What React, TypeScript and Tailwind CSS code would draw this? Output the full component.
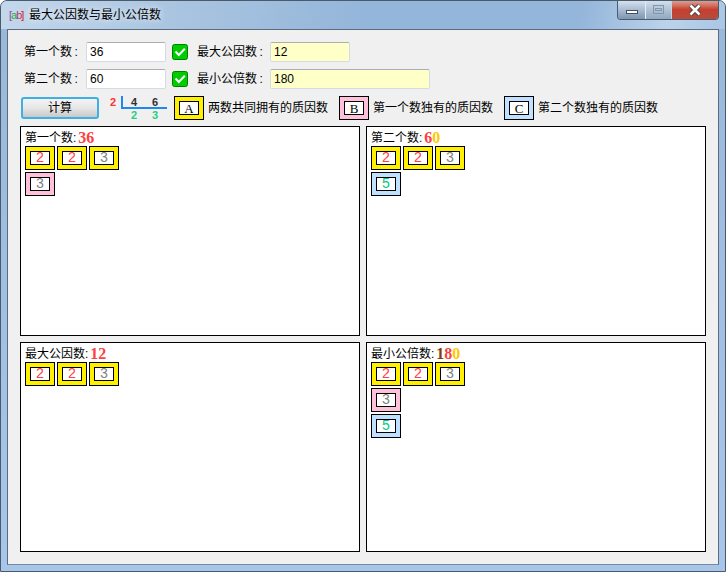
const TILE_BG: Record<string, string> = {
  both: "bg-[#fff000]",
  first: "bg-[#ffc0dc]",
  second: "bg-[#c0e0ff]",
};

const TILE_TEXT: Record<string, string> = {
  "2": "text-[#ff4040] font-['Liberation_Mono',monospace] text-[14px]",
  "3": "text-[#808080] font-['Liberation_Mono',monospace] text-[14px]",
  "5": "text-[#00c880] font-['Liberation_Mono',monospace] text-[14px]",
  A: "text-black font-['Liberation_Serif',serif] text-[13px]",
  B: "text-black font-['Liberation_Serif',serif] text-[13px]",
  C: "text-black font-['Liberation_Serif',serif] text-[13px]",
};

type Factor = { n: string; kind: string };

function Tile({ n, kind }: Factor) {
  return (
    <div className={`w-[30px] h-[24px] shrink-0 border border-black flex items-center justify-center ${TILE_BG[kind]}`}>
      <div className={`w-[20px] h-[14px] border border-black bg-white flex items-center justify-center leading-none ${TILE_TEXT[n]}`}>
        {n}
      </div>
    </div>
  );
}

function Check() {
  return (
    <svg width="16" height="16" viewBox="0 0 16 16" className="shrink-0">
      <rect x="0.5" y="0.5" width="15" height="15" rx="2" fill="#00cc00" stroke="#008000" />
      <path d="M3.5 7.5 L6.8 11 L12.8 4.8" fill="none" stroke="#ffffff" strokeWidth="2" />
    </svg>
  );
}

function Panel({
  label,
  digits,
  rows,
}: {
  label: string;
  digits: [string, string][];
  rows: Factor[][];
}) {
  return (
    <div className="h-[210px] bg-white border border-black px-[4px] pt-[2px]">
      <div className="h-[17px] flex items-center text-[12px] text-black leading-none">
        {label}:
        <span className="font-['Liberation_Serif',serif] font-bold text-[16px] ml-[2px]">
          {digits.map(([d, c], i) => (
            <span key={i} className={c}>
              {d}
            </span>
          ))}
        </span>
      </div>
      <div className="flex flex-col gap-[2px]">
        {rows.map((r, i) => (
          <div key={i} className="flex gap-[2px]">
            {r.map((f, j) => (
              <Tile key={j} {...f} />
            ))}
          </div>
        ))}
      </div>
    </div>
  );
}

function Legend({ letter, kind, text, className }: { letter: string; kind: string; text: string; className: string }) {
  return (
    <div className={`flex items-center gap-[4px] text-[12px] ${className}`}>
      <Tile n={letter} kind={kind} />
      <span>{text}</span>
    </div>
  );
}

function Fraction() {
  return (
    <svg width="60" height="24" viewBox="0 0 60 24" className="ml-[11px] shrink-0 font-['Liberation_Sans',sans-serif] font-bold text-[11px]">
      <path d="M12 0 V12 H57" fill="none" stroke="#1e88f0" strokeWidth="2" />
      <text x="0" y="10" fill="#ff3030">2</text>
      <text x="21" y="10" fill="#303030">4</text>
      <text x="42" y="10" fill="#303030">6</text>
      <text x="21" y="23" fill="#20d080">2</text>
      <text x="42" y="23" fill="#20d080">3</text>
    </svg>
  );
}

const RED = "text-[#ff4040]";
const YELLOW = "text-[#ffc800]";
const BROWN = "text-[#804000]";

const two: Factor = { n: "2", kind: "both" };
const three: Factor = { n: "3", kind: "both" };

export default function App() {
  return (
    <div className="w-[726px] h-[572px] overflow-hidden rounded-t-[7px] border border-[#4a5a6a] bg-gradient-to-b from-[#98b8da] to-[#a8c6ea] font-['Liberation_Sans','Noto_Sans_CJK_SC',sans-serif] text-black flex flex-col">
      {/* title bar */}
      <div className="h-[28px] shrink-0 flex items-start pl-[8px] pr-[6px] bg-[linear-gradient(100deg,#c4d8ec_0%,#a9c4e0_25%,#94b6da_50%,#94b6da_80%,#bcd3ea_92%,#a9c6e4_100%)]">
        <div className="mt-[7px] w-[16px] text-[11px] leading-[14px] tracking-[-1px] whitespace-nowrap">
          <span className="text-[#a040a0]">[</span>
          <span className="text-[#20b040]">a</span>
          <span className="text-[#d03060]">b</span>
          <span className="text-[#d02020]">]</span>
        </div>
        <div className="mt-[7px] ml-[4px] text-[12px] leading-[14px] [text-shadow:0_0_6px_#ffffff]">最大公因数与最小公倍数</div>
        <div className="ml-auto flex h-[20px] -mt-px rounded-b-[4px] border border-t-0 border-[#4c5c70] overflow-hidden">
          <div className="w-[28px] flex items-center justify-center border-r border-[#e4ecf4] bg-gradient-to-b from-[#dbe6f0] via-[#a9bdd3] to-[#7e96b0]">
            <div className="w-[12px] h-[4px] mt-[5px] bg-white border border-[#40505f]" />
          </div>
          <div className="w-[26px] flex items-center justify-center border-r border-[#c8d4e0] bg-gradient-to-b from-[#d8e3ee] via-[#b0c3d7] to-[#93a9c0]">
            <div className="w-[11px] h-[9px] border border-[#8296ac] flex items-center justify-center">
              <div className="w-[7px] h-[3px] border border-[#8296ac]" />
            </div>
          </div>
          <div className="w-[46px] flex items-center justify-center bg-gradient-to-b from-[#dca79c] via-[#c64030] to-[#b84a3c]">
            <svg width="14" height="12" viewBox="0 0 14 12">
              <path d="M2.5 1.5 L11.5 10.5 M11.5 1.5 L2.5 10.5" stroke="#3c3c3c" strokeWidth="4.4" />
              <path d="M2.5 1.5 L11.5 10.5 M11.5 1.5 L2.5 10.5" stroke="#ffffff" strokeWidth="2.6" />
            </svg>
          </div>
        </div>
      </div>

      {/* client area */}
      <div className="mx-[6px] h-[536px] border border-[#5c6c80] border-b-[#7a8a9c] bg-[#f0f0f0] pt-[12px] text-[12px]">
        <div className="flex items-center h-[20px] pl-[16px]">
          <span className="w-[62px]">第一个数&thinsp;:</span>
          <div className="w-[80px] h-[20px] rounded-[2px] border border-[#d4dbe4] border-t-[#abadb3] bg-white pl-[3px] leading-[18px]">36</div>
          <div className="ml-[6px]"><Check /></div>
          <span className="ml-[9px] w-[73px]">最大公因数&thinsp;:</span>
          <div className="w-[80px] h-[20px] rounded-[2px] border border-[#d4dbe4] border-t-[#abadb3] bg-[#ffffc8] pl-[3px] leading-[18px]">12</div>
        </div>
        <div className="flex items-center h-[20px] pl-[16px] mt-[7px]">
          <span className="w-[62px]">第二个数&thinsp;:</span>
          <div className="w-[80px] h-[20px] rounded-[2px] border border-[#d4dbe4] border-t-[#abadb3] bg-white pl-[3px] leading-[18px]">60</div>
          <div className="ml-[6px]"><Check /></div>
          <span className="ml-[9px] w-[73px]">最小公倍数&thinsp;:</span>
          <div className="w-[160px] h-[20px] rounded-[2px] border border-[#d4dbe4] border-t-[#abadb3] bg-[#ffffc8] pl-[3px] leading-[18px]">180</div>
        </div>

        <div className="flex items-center h-[24px] pl-[13px] mt-[7px]">
          <div className="w-[78px] h-[22px] rounded-[3px] border-2 border-[#40b0e4] bg-gradient-to-b from-[#f4f4f4] via-[#e6e6e6] to-[#c8c8c8] flex items-center justify-center">
            计算
          </div>
          <Fraction />
          <Legend letter="A" kind="both" text="两数共同拥有的质因数" className="ml-[4px]" />
          <Legend letter="B" kind="first" text="第一个数独有的质因数" className="ml-[11px]" />
          <Legend letter="C" kind="second" text="第二个数独有的质因数" className="ml-[11px]" />
        </div>

        <div className="grid grid-cols-[340px_340px] gap-[6px] mt-[6px] pl-[12px]">
          <Panel
            label="第一个数"
            digits={[["3", RED], ["6", RED]]}
            rows={[[two, two, three], [{ n: "3", kind: "first" }]]}
          />
          <Panel
            label="第二个数"
            digits={[["6", RED], ["0", YELLOW]]}
            rows={[[two, two, three], [{ n: "5", kind: "second" }]]}
          />
          <Panel
            label="最大公因数"
            digits={[["1", RED], ["2", RED]]}
            rows={[[two, two, three]]}
          />
          <Panel
            label="最小公倍数"
            digits={[["1", BROWN], ["8", RED], ["0", YELLOW]]}
            rows={[[two, two, three], [{ n: "3", kind: "first" }], [{ n: "5", kind: "second" }]]}
          />
        </div>
      </div>
    </div>
  );
}
